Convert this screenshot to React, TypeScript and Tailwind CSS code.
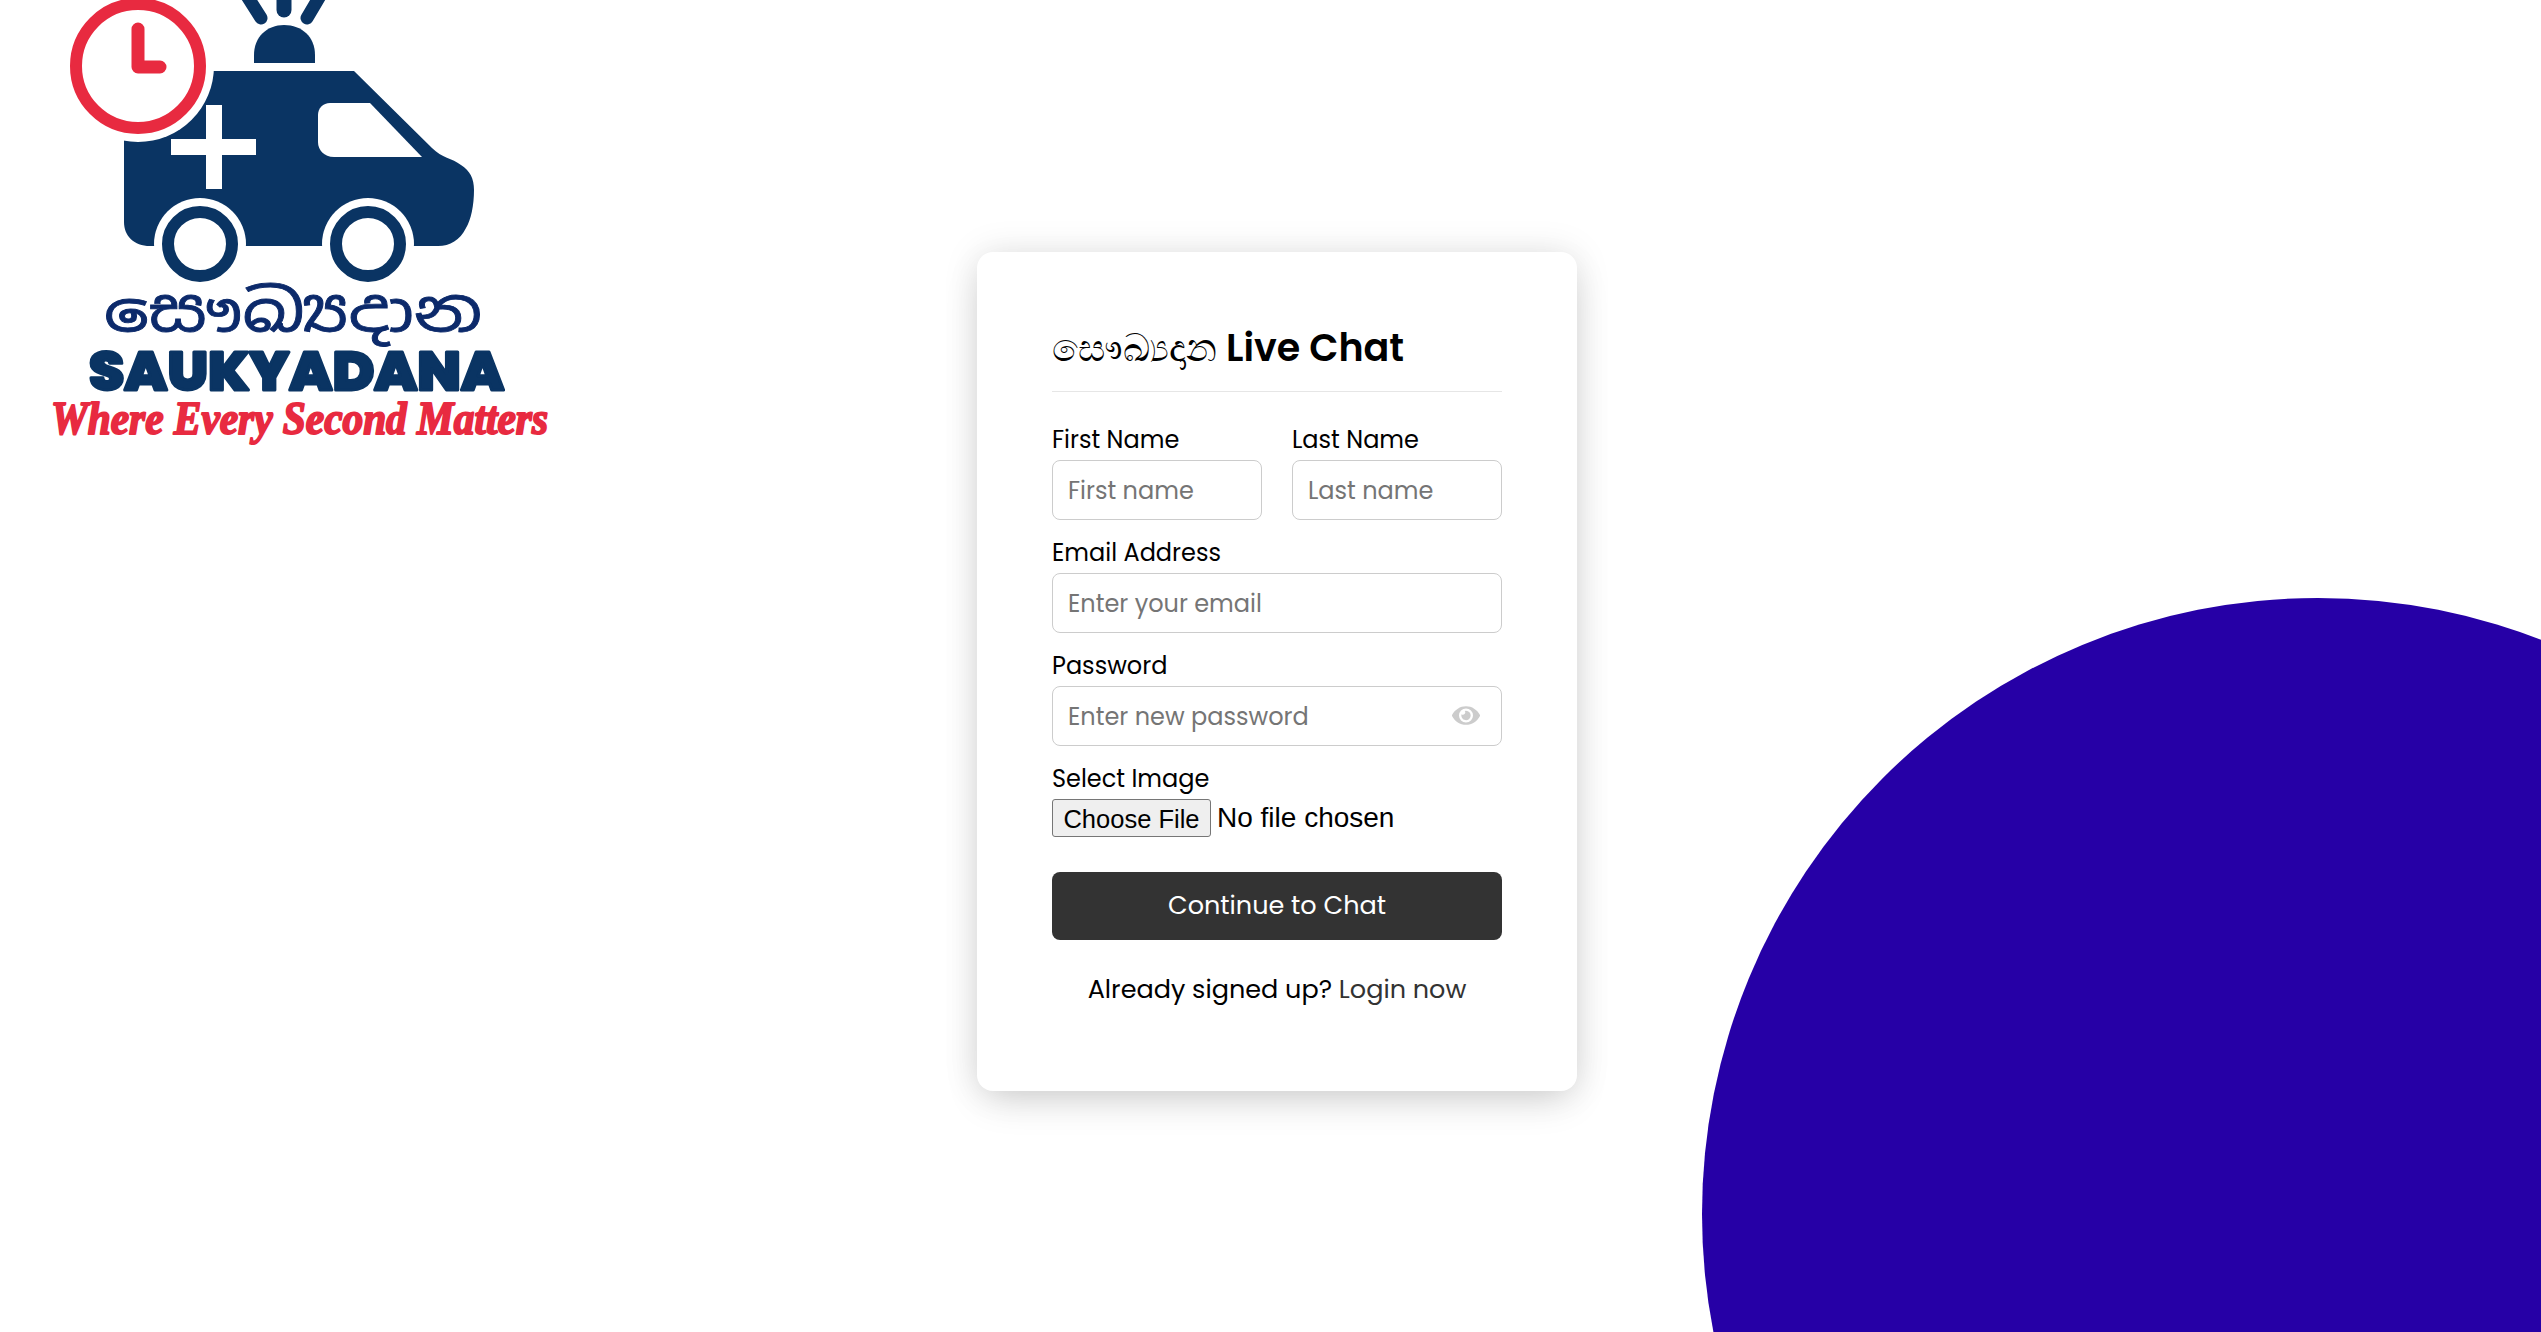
import React from 'react';
import { FaEye } from 'react-icons/fa';

const poppins = "font-['Poppins','Inter','Noto_Sans',sans-serif]";

// Logo drawn by hand, the wordmarks stay real text
const Logo = () => (
  <svg width="600" height="460" viewBox="0 0 600 460" className="block">
    <path
      d="M150 71 H354 L432 148 C442 158 452 158 461 165 C470 171 474 178 474 190 C474 205 471 220 466 228 C460 240 450 246 438 246 H150 C134 246 124 236 124 222 V71 Z"
      fill="#0a3463"
    />
    <circle cx="138" cy="66" r="76" fill="#fff" />
    <circle cx="138" cy="66" r="62" fill="#fff" stroke="#e82a40" strokeWidth="12" />
    <path d="M138 29 V67 H160" fill="none" stroke="#e82a40" strokeWidth="13" strokeLinecap="round" strokeLinejoin="round" />
    <path d="M206 105 H222 V139 H256 V155 H222 V189 H206 V155 H171 V139 H206 Z" fill="#fff" />
    <path d="M330 103 H370 L422 157 H334 C324 157 318 150 318 142 V115 C318 108 323 103 330 103 Z" fill="#fff" />
    <path d="M254 63 V55 C254 37 267 25 284 25 C302 25 315 37 315 55 V63 Z" fill="#0a3463" />
    <path d="M247 -4 L261 18 M320 -4 L307 18" stroke="#0a3463" strokeWidth="13" strokeLinecap="round" fill="none" />
    <path d="M284 -2 V10" stroke="#0a3463" strokeWidth="15" strokeLinecap="round" fill="none" />
    <circle cx="200" cy="244" r="46" fill="#fff" />
    <circle cx="368" cy="244" r="46" fill="#fff" />
    <circle cx="200" cy="244" r="32" fill="#fff" stroke="#0a3463" strokeWidth="12" />
    <circle cx="368" cy="244" r="32" fill="#fff" stroke="#0a3463" strokeWidth="12" />
    <text x="104" y="331" fontSize="58" fill="#0c2a6b" stroke="#0c2a6b" strokeWidth="0.8" textLength="378" lengthAdjust="spacingAndGlyphs" fontFamily="'Noto Sans Sinhala','Noto Sans','DejaVu Sans',sans-serif">සෞඛ්‍යදාන</text>
    <text x="89" y="390" fontSize="55" fontWeight="800" fill="#0a3463" stroke="#0a3463" strokeWidth="3" strokeLinejoin="round" textLength="415" lengthAdjust="spacingAndGlyphs" fontFamily="Poppins,Inter,'Liberation Sans',sans-serif">SAUKYADANA</text>
    <text x="51" y="434" fontSize="46" fontWeight="700" fontStyle="italic" fill="#e82a40" stroke="#e82a40" strokeWidth="2" strokeLinejoin="round" textLength="497" lengthAdjust="spacingAndGlyphs" fontFamily="'Liberation Serif',serif">Where Every Second Matters</text>
  </svg>
);

interface FieldProps {
  label: string;
  placeholder: string;
  type?: string;
  children?: React.ReactNode;
}

const Field: React.FC<FieldProps> = ({ label, placeholder, type = 'text', children }) => (
  <div className="relative flex flex-col gap-[4px]">
    <label className="text-[24px] leading-[32px] text-black">{label}</label>
    <input
      type={type}
      placeholder={placeholder}
      className="w-full h-[60px] px-[15px] text-[24px] border border-[#cccccc] rounded-[8px] outline-none placeholder:text-[#757575]"
    />
    {children}
  </div>
);

export default function App() {
  return (
    <div className={`relative h-screen w-full overflow-hidden bg-white ${poppins}`}>
      {/* Decoration and logo sit behind the form */}
      <div className="absolute left-[1702px] top-[598px] w-[1232px] h-[1232px] rounded-full bg-[#2600a6]" />
      <div className="absolute left-0 top-0">
        <Logo />
      </div>

      <main className="relative flex h-full items-start justify-center pl-[13px] pt-[252px]">
        <section className="w-[600px] h-[839px] bg-white rounded-[16px] px-[75px] pt-[66px] shadow-[0_0_36px_rgba(0,0,0,0.1),0_14px_40px_-8px_rgba(0,0,0,0.16)]">
          <header className="h-[74px] border-b border-[#e6e6e6] text-[38px] leading-[60px] font-semibold text-black">
            <span className="font-normal">සෞඛ්‍යදාන</span> Live Chat
          </header>

          <form className="flex flex-col mt-[32px]">
            <div className="grid grid-cols-2 gap-[30px]">
              <Field label="First Name" placeholder="First name" />
              <Field label="Last Name" placeholder="Last name" />
            </div>
            <div className="mt-[17px]">
              <Field label="Email Address" placeholder="Enter your email" />
            </div>
            <div className="mt-[17px]">
              <Field label="Password" placeholder="Enter new password" type="password">
                <FaEye className="absolute right-[22px] bottom-[18px] w-[28px] h-[25px] text-[#cccccc]" />
              </Field>
            </div>
            <div className="mt-[17px] flex flex-col gap-[4px]">
              <label className="text-[24px] leading-[32px] text-black">Select Image</label>
              <div className="flex items-center h-[38px] font-['Liberation_Sans',sans-serif] text-black">
                <button type="button" className="h-[38px] w-[159px] text-[25.5px] bg-[#efefef] border border-[#767676] rounded-[3px]">Choose File</button>
                <span className="ml-[6px] text-[28px]">No file chosen</span>
              </div>
            </div>
            <button type="button" className="mt-[35px] h-[68px] pb-[2px] bg-[#333333] text-white text-[25.5px] rounded-[8px]">
              Continue to Chat
            </button>
            <p className="mt-[32px] text-center text-[25.5px] leading-[34px] text-black">
              Already signed up? <a className="text-[#333333]">Login now</a>
            </p>
          </form>
        </section>
      </main>
    </div>
  );
}
